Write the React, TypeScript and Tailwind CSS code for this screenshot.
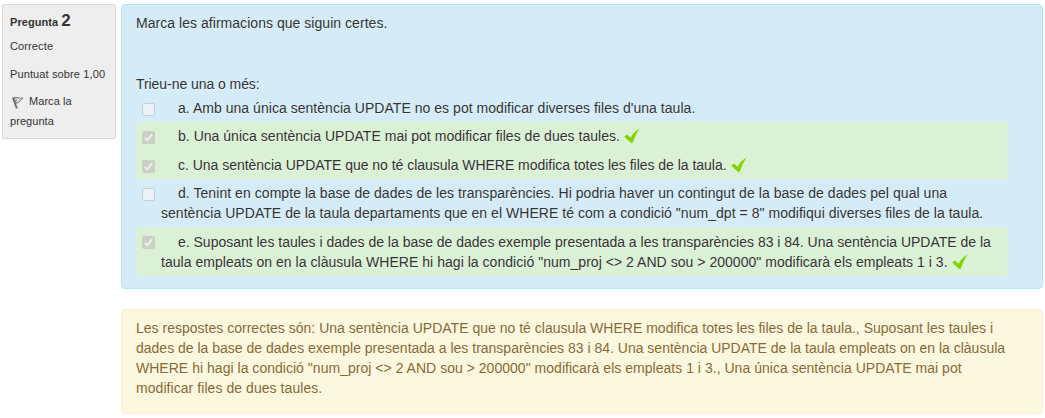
type Line = {
  text: string;
  tracking?: string;
};

type Answer = {
  lines: Line[];
  correct: boolean;
  row: string;
  pad: string;
};

const answers: Answer[] = [
  {
    lines: [
      {
        text: "a. Amb una única sentència UPDATE no es pot modificar diverses files d'una taula.",
        tracking: "tracking-[0.035px]",
      },
    ],
    correct: false,
    row: "h-7",
    pad: "pt-1",
  },
  {
    lines: [
      {
        text: "b. Una única sentència UPDATE mai pot modificar files de dues taules.",
        tracking: "tracking-[0.025px]",
      },
    ],
    correct: true,
    row: "h-[29px] bg-[#dbf1d6]",
    pad: "pt-1",
  },
  {
    lines: [
      {
        text: "c. Una sentència UPDATE que no té clausula WHERE modifica totes les files de la taula.",
        tracking: "tracking-[-0.025px]",
      },
    ],
    correct: true,
    row: "h-7 bg-[#dbf1d6]",
    pad: "pt-1",
  },
  {
    lines: [
      {
        text: "d. Tenint en compte la base de dades de les transparències. Hi podria haver un contingut de la base de dades pel qual una",
        tracking: "tracking-[0.055px]",
      },
      {
        text: "sentència UPDATE de la taula departaments que en el WHERE té com a condició \"num_dpt = 8\" modifiqui diverses files de la taula.",
        tracking: "tracking-[0.04px]",
      },
    ],
    correct: false,
    row: "h-12",
    pad: "pt-1",
  },
  {
    lines: [
      {
        text: "e. Suposant les taules i dades de la base de dades exemple presentada a les transparències 83 i 84. Una sentència UPDATE de la",
        tracking: "tracking-[-0.008px]",
      },
      {
        text: "taula empleats on en la clàusula WHERE hi hagi la condició \"num_proj <> 2 AND sou > 200000\" modificarà els empleats 1 i 3.",
        tracking: "tracking-[0.035px]",
      },
    ],
    correct: true,
    row: "h-[49px] bg-[#dbf1d6]",
    pad: "pt-[5px]",
  },
];

const feedback: Line[] = [
  {
    text: "Les respostes correctes són: Una sentència UPDATE que no té clausula WHERE modifica totes les files de la taula., Suposant les taules i",
    tracking: "tracking-[0.01px]",
  },
  {
    text: "dades de la base de dades exemple presentada a les transparències 83 i 84. Una sentència UPDATE de la taula empleats on en la clàusula",
  },
  {
    text: "WHERE hi hagi la condició \"num_proj <> 2 AND sou > 200000\" modificarà els empleats 1 i 3., Una única sentència UPDATE mai pot",
    tracking: "tracking-[0.025px]",
  },
  { text: "modificar files de dues taules.", tracking: "tracking-[0.06px]" },
];

function CheckBox({ checked }: { checked: boolean }) {
  return (
    <span
      role="checkbox"
      aria-checked={checked}
      aria-disabled="true"
      className={
        checked
          ? "mt-[9px] ml-1.5 flex size-[13px] shrink-0 items-center justify-center rounded-[2px] bg-[#c9d0c8]"
          : "mt-[9px] ml-1.5 flex size-[13px] shrink-0 rounded-[2px] border border-[#c8cfd2] bg-[#ebf2f5]"
      }
    >
      {checked && (
        <svg viewBox="0 0 13 13" className="size-[13px]" fill="none" stroke="#edf2eb" strokeWidth="1.9">
          <path d="M2.8 6.8 5.2 9.3 10.2 3.2" />
        </svg>
      )}
    </span>
  );
}

function Tick() {
  return (
    <svg viewBox="0 0 16 16" className="ml-1 inline-block size-4 align-[-3px]" fill="#80d500">
      <path d="M.3 8.6 3 6.6 6.6 9.8C9 5.7 11.7 2.6 15.7.3 12.6 4.8 10.5 9.9 8.8 14.4L7.8 15.3C5.3 13.6 2.6 11.3.3 8.6Z" />
    </svg>
  );
}

function Flag() {
  return (
    <svg viewBox="0 0 12 13" className="ml-0.5 mr-[5px] inline-block h-[13px] w-3 align-[-4px]" fill="none">
      <path d="M.8 1.5 4.8 12.4" stroke="#666" strokeWidth="1.7" />
      <path d="M2 1.7C5 .5 7 3 11 2 8.5 3.5 8 6.8 4.3 7.3Z" fill="#e2e2e2" stroke="#777" strokeWidth="1" />
      <path d="M4 2.4 5.4 6.3" stroke="#888" strokeWidth=".7" />
    </svg>
  );
}

export default function App() {
  return (
    <main className="flex h-[418px] w-[1045px] items-start gap-[5px] overflow-hidden bg-white pt-1 pl-0.5 font-['Liberation_Sans',Arial,sans-serif] text-sm leading-5 text-[#333]">
      <aside className="h-[135px] w-[114px] shrink-0 rounded-[2px] border border-[#d9d9d9] bg-[#eee] pl-[7px] text-[11px]">
        <h3 className="mt-1.5 h-5 font-bold tracking-[0.05px]">
          Pregunta <span className="text-[17px]">2</span>
        </h3>
        <p className="mt-[5px] tracking-[0.12px]">Correcte</p>
        <p className="mt-2 whitespace-nowrap tracking-[0.12px]">Puntuat sobre 1,00</p>
        <p className="mt-[7px] tracking-[0.06px]">
          <Flag />
          Marca la
          <br />
          pregunta
        </p>
      </aside>

      <div className="w-[922px] shrink-0 whitespace-nowrap">
        <section className="h-[285px] rounded border border-[#b2e8f2] bg-[#d5ecf8] pt-2 pr-[34px] pl-3.5 [text-shadow:0_1px_0_rgba(255,255,255,0.5)]">
          <p className="tracking-[0.04px]">Marca les afirmacions que siguin certes.</p>
          <p className="mt-[41px] tracking-[-0.06px]">Trieu-ne una o més:</p>
          {answers.map((answer) => (
            <div key={answer.lines[0].text} className={`flex ${answer.row}`}>
              <CheckBox checked={answer.correct} />
              <div className={`ml-1.5 ${answer.pad}`}>
                {answer.lines.map((line, i) => (
                  <div key={line.text} className={`h-5 ${i === 0 ? "pl-[17px]" : ""} ${line.tracking ?? ""}`}>
                    {line.text}
                    {answer.correct && i === answer.lines.length - 1 && <Tick />}
                  </div>
                ))}
              </div>
            </div>
          ))}
        </section>
        <section className="mt-5 h-[105px] rounded border border-[#fbeed5] bg-[#fbf8df] pt-2 pl-3.5 text-[#8a6930] [text-shadow:0_1px_0_rgba(255,255,255,0.5)]">
          {feedback.map((line) => (
            <p key={line.text} className={line.tracking}>
              {line.text}
            </p>
          ))}
        </section>
      </div>
    </main>
  );
}
